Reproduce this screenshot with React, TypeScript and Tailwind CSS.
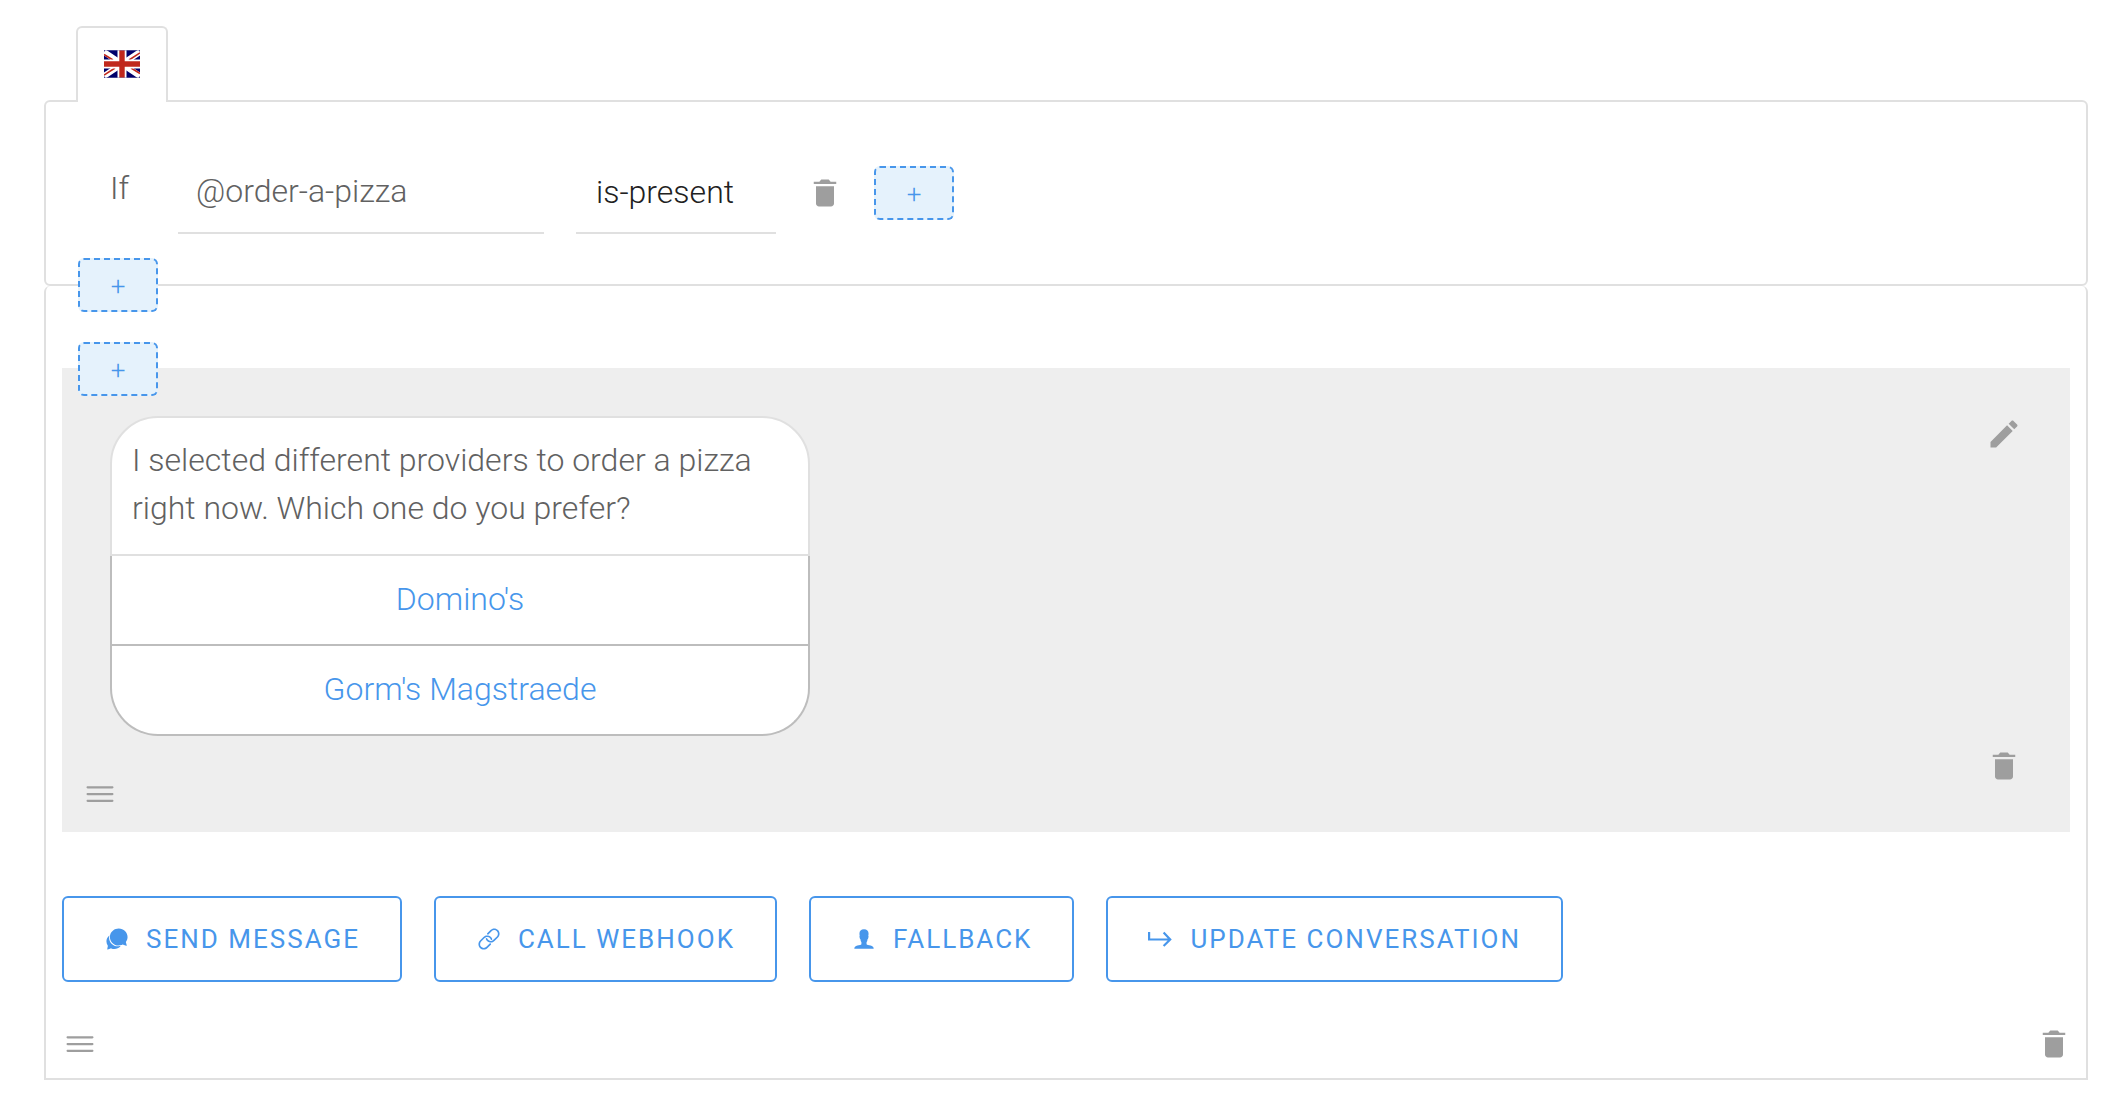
import type { ReactNode } from "react";
import {
  IoIosChatbubbles,
  IoIosLink,
  IoIosMenu,
  IoIosPerson,
  IoMdCreate,
  IoMdTrash,
} from "react-icons/io";

function FlagUK() {
  return (
    <svg viewBox="0 0 36 28" className="h-7 w-9" role="img" aria-label="English">
      <rect width="36" height="28" fill="#00006b" />
      <path d="M0 2 L36 26 M36 2 L0 26" stroke="#fff" strokeWidth="6" />
      <path
        d="M0 4.5 L9 10 M36 2.8 L25 10 M0 25.2 L11 18 M36 23.5 L27 18"
        stroke="#c0281c"
        strokeWidth="1.6"
      />
      <path d="M18 0 V28 M0 14 H36" stroke="#fff" strokeWidth="9" />
      <path d="M18 0 V28 M0 14 H36" stroke="#c0281c" strokeWidth="5.4" />
      <path d="M0 0.3 H36 M0 27.7 H36" stroke="#8a8ab8" strokeWidth="0.6" />
    </svg>
  );
}

function ReturnRight() {
  return (
    <svg viewBox="0 0 26 26" className="size-[26px]" fill="none" stroke="currentColor" strokeWidth="2.2" aria-hidden="true">
      <path d="M1.1 6 V13.5 H22 M15.6 6.6 L22.2 13.5 L15.6 20" />
    </svg>
  );
}

function AddButton({ label }: { label: string }) {
  return (
    <button
      type="button"
      aria-label={label}
      className="flex h-[54px] w-20 items-center justify-center rounded-md border-2 border-dashed border-[#4796eb] bg-[#e5f2fc] pt-0.5 text-[26px] font-light text-[#4796eb]"
    >
      +
    </button>
  );
}

function IconButton({ label, children }: { label: string; children: ReactNode }) {
  return (
    <button type="button" aria-label={label} className="size-9 shrink-0 text-4xl text-[#9e9e9e]">
      {children}
    </button>
  );
}

function ActionButton({ icon, children }: { icon: ReactNode; children: ReactNode }) {
  return (
    <button
      type="button"
      className="flex h-[86px] items-center gap-4 rounded-md border-2 border-[#4796eb] bg-white px-10 text-[26px] font-normal tracking-[2px] whitespace-nowrap text-[#4796eb] uppercase"
    >
      {icon}
      <span>{children}</span>
    </button>
  );
}

function ConditionPanel() {
  return (
    <section className="relative rounded-md border-2 border-[#e0e0e0] pt-8 pr-4 pb-[50px] pl-16">
      <div className="flex h-[100px] items-stretch">
        <label htmlFor="entity" className="w-[68px] pt-[30px] leading-[48px] text-[#616161]">
          If
        </label>
        <input
          id="entity"
          defaultValue="@order-a-pizza"
          className="mr-8 w-[366px] border-b-2 border-[#e0e0e0] px-[18px] pt-4 text-[#616161] outline-none"
        />
        <select
          aria-label="Operator"
          className="mr-[31px] w-[200px] appearance-none border-b-2 border-[#e0e0e0] bg-transparent px-5 pt-[18px] text-[#212121] outline-none"
        >
          <option>is-present</option>
        </select>
        <div className="flex items-center gap-[31px] pt-[18px]">
          <IconButton label="Delete condition">
            <IoMdTrash />
          </IconButton>
          <AddButton label="Add condition" />
        </div>
      </div>
      <div className="absolute -bottom-7 left-8 z-10">
        <AddButton label="Add condition group" />
      </div>
    </section>
  );
}

function MessageCard() {
  return (
    <div className="w-[700px] max-w-full">
      <p className="rounded-t-[48px] border-2 border-[#e0e0e0] bg-white px-5 pt-[18px] pb-[22px] leading-[48px] text-[#616161]">
        I selected different providers to order a pizza right now. Which one do you prefer?
      </p>
      <button
        type="button"
        className="block h-[90px] w-full border-x-2 border-b-2 border-[#bdbdbd] bg-white pb-0.5 text-[#4796eb]"
      >
        Domino's
      </button>
      <button
        type="button"
        className="block h-[90px] w-full rounded-b-[48px] border-x-2 border-b-2 border-[#bdbdbd] bg-white pb-0.5 text-[#4796eb]"
      >
        Gorm's Magstraede
      </button>
    </div>
  );
}

function MessageBlock() {
  return (
    <article className="relative bg-[#eeeeee] pt-12 pr-12 pb-5 pl-5">
      <div className="absolute -top-[26px] left-4 z-10">
        <AddButton label="Add message" />
      </div>
      <div className="flex justify-between">
        <div className="pl-7">
          <MessageCard />
        </div>
        <div className="-mb-12 flex flex-col justify-between">
          <IconButton label="Edit message">
            <IoMdCreate />
          </IconButton>
          <IconButton label="Delete message">
            <IoMdTrash />
          </IconButton>
        </div>
      </div>
      <div className="mt-10 flex">
        <IconButton label="Reorder message">
          <IoIosMenu />
        </IconButton>
      </div>
    </article>
  );
}

export default function App() {
  return (
    <main className="bg-white pt-[26px] pr-[22px] pb-8 pl-11 font-['Roboto',sans-serif] text-[32px] font-light">
      <button
        type="button"
        className="relative z-10 -mb-0.5 ml-8 flex h-[76px] w-[92px] items-center justify-center rounded-t-md border-2 border-b-0 border-[#e0e0e0] bg-white pb-0.5"
      >
        <FlagUK />
      </button>
      <ConditionPanel />
      <section className="rounded-t-md border-x-2 border-b-2 border-[#e0e0e0] px-4 pt-[82px] pb-4">
        <MessageBlock />
        <div className="mt-16 flex flex-wrap gap-8">
          <ActionButton icon={<IoIosChatbubbles />}>Send message</ActionButton>
          <ActionButton icon={<IoIosLink />}>Call webhook</ActionButton>
          <ActionButton icon={<IoIosPerson />}>Fallback</ActionButton>
          <ActionButton icon={<ReturnRight />}>Update conversation</ActionButton>
        </div>
        <div className="mt-11 -mr-0.5 flex justify-between">
          <IconButton label="Reorder block">
            <IoIosMenu />
          </IconButton>
          <IconButton label="Delete block">
            <IoMdTrash />
          </IconButton>
        </div>
      </section>
    </main>
  );
}
